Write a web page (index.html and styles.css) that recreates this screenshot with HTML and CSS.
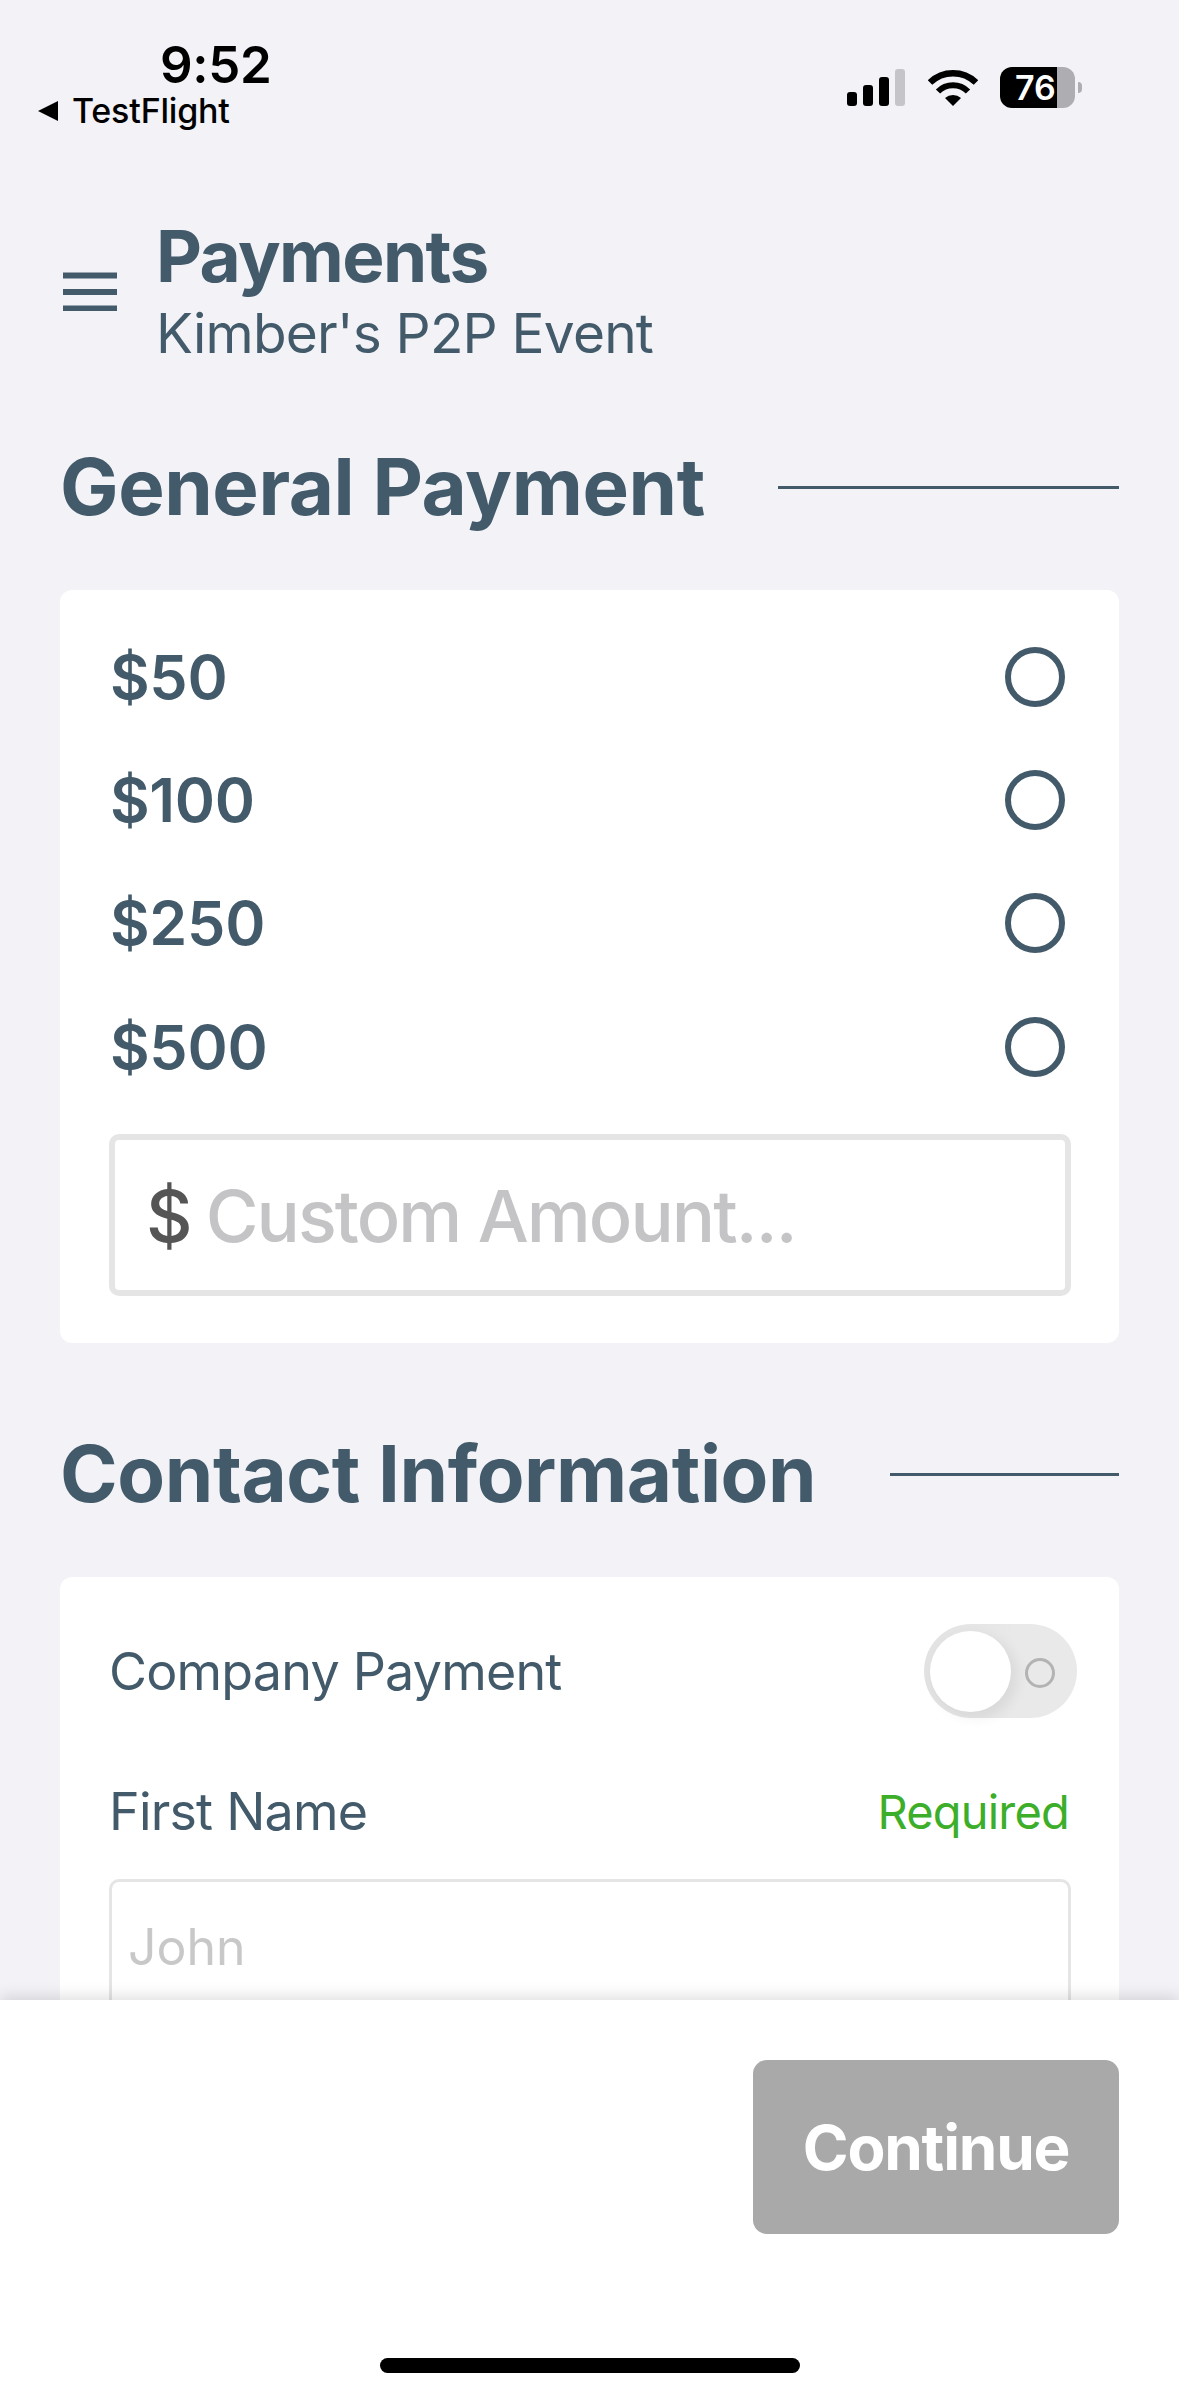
FILE: index.html
```html
<!DOCTYPE html>
<html lang="en">
<head>
<meta charset="utf-8">
<title>Payments</title>
<link rel="stylesheet" href="styles.css">
</head>
<body>
<div class="screen">
  <header class="status">
    <div class="status-left">
      <div class="time">9:52</div>
      <div class="back"><span class="back-arrow"></span><span>TestFlight</span></div>
    </div>
    <div class="status-right">
      <div class="signal">
        <span class="bar b1"></span><span class="bar b2"></span><span class="bar b3"></span><span class="bar b4"></span>
      </div>
      <svg class="wifi" viewBox="0 0 50 37" aria-hidden="true">
        <path d="M2 13.5 A33 33 0 0 1 48 13.5" fill="none" stroke="#000" stroke-width="6.5"/>
        <path d="M10 22.5 A21 21 0 0 1 40 22.5" fill="none" stroke="#000" stroke-width="6"/>
        <path d="M17 29 A12 12 0 0 1 33 29 L25 37 Z" fill="#000"/>
      </svg>
      <div class="battery-wrap">
        <div class="battery">76</div>
        <span class="nub"></span>
      </div>
    </div>
  </header>

  <main class="content">
    <div class="title-row">
      <svg class="menu" viewBox="0 0 54 39" aria-hidden="true">
        <path d="M1 3.500H53M1 20H53M1 36.500H53" stroke="#425a6a" stroke-width="6" stroke-linecap="round" fill="none"/>
      </svg>
      <div class="titles">
        <h1>Payments</h1>
        <p>Kimber's P2P Event</p>
      </div>
    </div>

    <section class="section-general">
      <div class="section-head">
        <h2>General Payment</h2>
        <span class="rule rule-general"></span>
      </div>
      <div class="card card-amounts">
        <div class="amount"><span>$50</span><span class="radio"></span></div>
        <div class="amount"><span>$100</span><span class="radio"></span></div>
        <div class="amount"><span>$250</span><span class="radio"></span></div>
        <div class="amount"><span>$500</span><span class="radio"></span></div>
        <div class="custom"><span class="dollar">$</span><span class="placeholder">Custom Amount...</span></div>
      </div>
    </section>

    <section class="section-contact">
      <div class="section-head">
        <h2>Contact Information</h2>
        <span class="rule rule-contact"></span>
      </div>
      <div class="card card-contact">
        <div class="company">
          <span>Company Payment</span>
          <div class="toggle"><span class="knob"></span><span class="off-mark"></span></div>
        </div>
        <div class="label-row">
          <span>First Name</span>
          <span class="required">Required</span>
        </div>
        <div class="text-input">John</div>
      </div>
    </section>
  </main>

  <footer class="footer">
    <button class="continue" type="button">Continue</button>
    <div class="home"></div>
  </footer>
</div>
</body>
</html>
```

FILE: styles.css
```css
* { box-sizing: border-box; }
html, body { margin: 0; padding: 0; }
body { background: #f2f2f7; font-family: "Inter", "Liberation Sans", sans-serif; color: #425a6a; }

.screen { width: 1179px; height: 2396px; display: flex; flex-direction: column; overflow: hidden; background: #f2f2f7; }

.status { height: 200px; flex: none; display: flex; justify-content: space-between; align-items: flex-start; color: #000; padding: 0 97px 0 38px; }
.status-left { padding-top: 36px; }
.time { font-size: 51px; font-weight: 600; line-height: 58px; margin-left: 122px; letter-spacing: -.3px; }
.back { display: flex; align-items: center; gap: 14px; font-size: 34px; font-weight: 500; line-height: 40px; margin-top: -3px; letter-spacing: -.2px; }
.back-arrow { width: 0; height: 0; border-style: solid; border-width: 10px 20px 10px 0; border-color: transparent #000 transparent transparent; }

.status-right { display: flex; align-items: center; padding-top: 67px; }
.signal { display: flex; align-items: flex-end; gap: 6px; height: 37px; margin-right: 23px; }
.bar { width: 10px; background: #000; border-radius: 3px; }
.b1 { height: 14px; }
.b2 { height: 21px; }
.b3 { height: 29px; }
.b4 { height: 37px; background: #c5c5c9; }
.wifi { width: 50px; height: 37px; margin-right: 22px; }
.battery-wrap { display: flex; align-items: center; gap: 3px; }
.battery { width: 75px; height: 41px; border-radius: 12px; background: linear-gradient(90deg, #000 76%, #aeaeb2 76%); color: #fff; font-size: 34px; font-weight: 600; line-height: 41px; padding-left: 15px; overflow: hidden; }
.nub { width: 4px; height: 11px; background: #aeaeb2; border-radius: 0 6px 6px 0; }

.content { flex: 1; min-height: 0; overflow: hidden; padding: 16px 60px 0; }
.title-row { display: flex; align-items: center; gap: 39px; padding-left: 3px; }
.menu { width: 54px; height: 39px; flex: none; }
h1 { margin: 0; font-size: 71px; font-weight: 700; line-height: 80px; letter-spacing: -1.6px; }
.titles p { margin: 4px 0 0; font-size: 55px; font-weight: 400; line-height: 66px; letter-spacing: -.8px; }

.section-general { padding-top: 74px; }
.section-contact { padding-top: 84px; }
.section-head { display: flex; align-items: center; justify-content: space-between; height: 94px; margin-bottom: 56px; }
h2 { margin: 0; font-size: 78px; font-weight: 700; line-height: 94px; white-space: nowrap; letter-spacing: -.4px; }
.rule { height: 3px; background: #425a6a; }
.rule-general { width: 341px; }
.rule-contact { width: 229px; }

.card { background: #fff; border-radius: 12px; }
.card-amounts { padding: 25px 48px 47px 49px; }
.amount { height: 123.300px; display: flex; align-items: center; justify-content: space-between; font-size: 61px; font-weight: 600; padding: 0 6px 0 1px; letter-spacing: -.3px; }
.radio { width: 60px; height: 60px; border: 6px solid #425a6a; border-radius: 50%; }
.custom { margin-top: 26px; height: 162px; border: 6px solid #e5e5e5; border-radius: 10px; display: flex; align-items: center; gap: 15px; padding-left: 31px; font-size: 72px; font-weight: 500; letter-spacing: -1.9px; }
.dollar { color: #555; font-weight: 500; }
.placeholder { color: #c4c4c6; }

.card-contact { padding: 47px 48px 60px 49px; font-size: 52px; letter-spacing: -.8px; }
.company { height: 94px; display: flex; align-items: center; justify-content: space-between; margin-right: -6px; font-weight: 400; }
.toggle { width: 153px; height: 94px; border-radius: 47px; background: linear-gradient(90deg, #e2e2e2, #e9e9e9 60%); display: flex; align-items: center; padding-left: 6px; gap: 14px; }
.knob { width: 81px; height: 81px; border-radius: 50%; background: #fff; box-shadow: 6px 5px 14px rgba(0,0,0,.07); }
.off-mark { width: 30px; height: 30px; margin-top: 3px; border: 3.500px solid #b3b3b3; border-radius: 50%; }
.label-row { display: flex; justify-content: space-between; align-items: center; height: 60px; margin-top: 63px; }
.required { color: #3cae2a; font-size: 47px; letter-spacing: -.8px; margin-right: 2px; }
.text-input { margin-top: 38px; height: 150px; border: 3px solid #e5e5e5; border-radius: 10px; padding: 35px 0 0 16px; font-size: 50px; line-height: 60px; color: #c8c8c8; letter-spacing: 0; }

.footer { height: 396px; flex: none; background: #fff; box-shadow: 0 -4px 14px rgba(0,0,0,.12); display: flex; flex-direction: column; align-items: center; padding-top: 60px; position: relative; }
.continue { align-self: flex-end; margin-right: 60px; width: 366px; height: 174px; border: 0; border-radius: 14px; background: #a9a9a9; color: #fff; font-family: inherit; font-size: 62px; font-weight: 700; letter-spacing: -1.2px; }
.home { width: 420px; height: 15px; border-radius: 8px; background: #000; margin-top: 124px; }
```
